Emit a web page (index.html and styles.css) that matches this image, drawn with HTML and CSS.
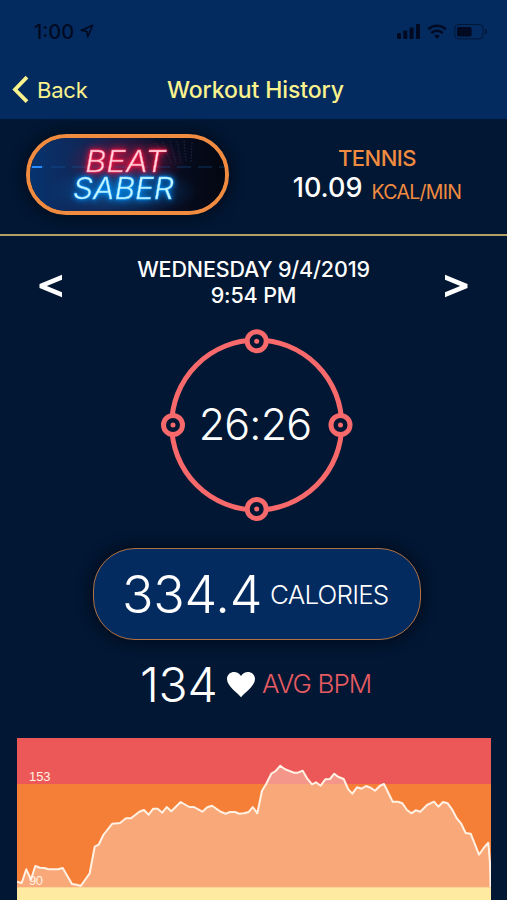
FILE: index.html
```html
<!DOCTYPE html>
<html lang="en">
<head>
<meta charset="utf-8">
<title>Workout History</title>
<link rel="stylesheet" href="styles.css">
</head>
<body>
<div class="app">
  <header class="header">
    <div class="status">
      <span class="clock">1:00</span>
      <svg class="location" viewBox="0 0 14 14"><path d="M1.2 6.4 12.6 1.2 7.8 12.8 6.8 7.2Z" fill="none" stroke="#010a20" stroke-width="1.6" stroke-linejoin="round"/></svg>
      <svg class="signals" viewBox="0 0 92 18">
        <g fill="#010a20">
          <rect x="1" y="10" width="4" height="6" rx="1"/><rect x="7.3" y="7.5" width="4" height="8.5" rx="1"/><rect x="13.6" y="4.5" width="4" height="11.5" rx="1"/><rect x="20" y="1" width="4" height="15" rx="1"/>
          <path d="M38.3 12.8a4.6 4.6 0 0 1 5.4 0L41 15.9Z"/>
          <rect x="61" y="4" width="14.6" height="9.6" rx="1.8"/>
        </g>
        <g fill="none" stroke="#010a20">
          <path d="M32.2 6.3a12.8 12.8 0 0 1 17.6 0M35.3 10a8.4 8.4 0 0 1 11.4 0" stroke-width="2.6"/>
          <rect x="58.7" y="1.5" width="28.4" height="14.4" rx="4" stroke-opacity=".65"/>
          <path d="M89.2 6.5q1.8 2.2 0 4.4" stroke-opacity=".7" stroke-width="1.5"/>
        </g>
      </svg>
    </div>
    <nav class="nav">
      <div class="back">
        <svg class="chevron" viewBox="0 0 18 30"><path d="M16 2.2 4 14.5 16 26.7" fill="none" stroke="#faf28c" stroke-width="3.8"/></svg>
        <span>Back</span>
      </div>
      <h1 class="title">Workout History</h1>
    </nav>
  </header>

  <section class="activity">
    <div class="game">
      <svg class="game-art" viewBox="0 0 195 73">
        <defs>
          <linearGradient id="night"><stop offset="0" stop-color="#06336f"/><stop offset=".35" stop-color="#14234f"/><stop offset=".7" stop-color="#080e24"/><stop offset="1" stop-color="#030710"/></linearGradient>
          <radialGradient id="redGlow"><stop offset="0" stop-color="#a01647" stop-opacity=".75"/><stop offset="1" stop-color="#7a123d" stop-opacity="0"/></radialGradient>
          <radialGradient id="blueGlow"><stop offset="0" stop-color="#0870b4" stop-opacity=".8"/><stop offset="1" stop-color="#06458c" stop-opacity="0"/></radialGradient>
        </defs>
        <rect width="195" height="73" fill="url(#night)"/>
        <ellipse cx="96" cy="24" rx="60" ry="27" fill="url(#redGlow)"/>
        <ellipse cx="92" cy="53" rx="76" ry="26" fill="url(#blueGlow)"/>
        <path d="M126 5l10 20M133 4l8 22M140 3l6 22M147 3l4 22M154 3l2 21M162 4l-1 20" stroke="#343a58" stroke-width="1" stroke-dasharray="2 1" opacity=".5"/>
        <path d="M0 29H195" stroke="#1762a8" stroke-width="1" stroke-dasharray="14 7" opacity=".5"/>
        <path d="M2 29H12" stroke="#268cff" stroke-width="2"/>
        <g class="neon">
          <text class="neon-red" x="55" y="33.5" textLength="81" lengthAdjust="spacingAndGlyphs">BEAT</text>
          <text class="neon-blue" x="43" y="60.5" textLength="101" lengthAdjust="spacingAndGlyphs">SABER</text>
        </g>
      </svg>
    </div>
    <div class="rate">
      <div class="sport">TENNIS</div>
      <div class="burn"><span class="burn-value">10.09</span><span class="burn-unit">KCAL/MIN</span></div>
    </div>
  </section>

  <section class="session">
    <svg class="arrow" viewBox="0 0 24 24"><path d="M23 .8v5L7.8 12 23 18.2v5L.5 14.1V9.9Z" fill="#fff"/></svg>
    <div class="date"><div class="day">WEDNESDAY 9/4/2019</div><div class="time">9:54 PM</div></div>
    <svg class="arrow" viewBox="0 0 24 24"><path d="M1 .8v5L16.2 12 1 18.2v5l22.5-9.1V9.9Z" fill="#fff"/></svg>
  </section>

  <section class="timer">
    <svg class="ring" viewBox="0 0 192 192">
      <g fill="#021733" stroke="#f8696c" stroke-width="5">
        <circle cx="95.7" cy="96" r="85"/>
        <circle cx="95.7" cy="12.3" r="9.5"/><circle cx="179.5" cy="96" r="9.5"/><circle cx="95.7" cy="180" r="9.5"/><circle cx="12" cy="96" r="9.5"/>
      </g>
      <g fill="#f8696c"><circle cx="95.7" cy="12.3" r="2.5"/><circle cx="179.5" cy="96" r="2.5"/><circle cx="95.7" cy="180" r="2.5"/><circle cx="12" cy="96" r="2.5"/></g>
    </svg>
    <span class="duration">26:26</span>
  </section>

  <section class="calories"><span class="cal-value">334.4</span><span class="cal-unit">CALORIES</span></section>

  <section class="heart-rate">
    <span class="bpm-value">134</span>
    <svg class="heart" viewBox="0 0 30 27"><path d="M15 26.2C11.7 22 1 15.2 1 8.1 1 .2 11.2-1.7 15 4.9 18.8-1.7 29 .2 29 8.1c0 7.1-10.7 13.9-14 18.1Z" fill="#fff"/></svg>
    <span class="bpm-unit">AVG BPM</span>
  </section>

  <svg class="chart" viewBox="17 738 474 162">
    <rect x="17" y="738" width="474" height="46" fill="#ec5858"/>
    <rect x="17" y="784" width="474" height="104" fill="#f67f38"/>
    <path fill="#fbd4b9" fill-opacity=".5" d="M17 888V881.7L21.7 883 26.3 869.3 31 879.5 35.3 866 40 867.7 44.3 868 48.7 869.3 58 869.3 62.7 868 72 884 76.7 884.7 80.7 886 89.7 873.3 94.7 846.7 98.7 844.7 103.3 835 112.3 823.7 120 823 126 818.3 131 818.3 139.3 811.7 144 810 148.7 814.7 153.3 808.7 157.7 808.7 162.3 812.7 166.7 807 171.3 811.3 180.7 802 189.3 807 194 807 202.3 811.7 207.3 807.3 212 805.7 220.7 811.7 225.7 813.7 230 812 235 812 239.3 813.7 244 813.3 248.7 812 252.7 807 257.3 813.3 262 790.7 266 784.3 271.3 773.7 275.7 771 280.3 765.7 285 769.3 294 772.7 298 772.7 302.7 770.7 307.3 778.7 312 784.3 316 782.3 320.7 785.7 325.3 779.3 330 779 334.3 773.7 338 776.7 343.7 779 348.3 789.3 352.3 793.7 357 787.3 361.7 788.7 366 786 370.7 787.7 375 790.7 379.7 786 384 784 392.7 801.7 398 801.7 402.3 803.3 407 810 411.3 813.3 415.7 810.3 420.3 811.7 427 805 434 801.7 438.3 806.7 443 802 447.7 803.3 452 809.3 457 818.7 461 823.3 465.7 833 470.7 833.7 479 854.7 483.7 848 488.3 842.7 490 863 490.5 888Z"/>
    <path fill="none" stroke="#fff2e4" stroke-width="2" stroke-linejoin="round" d="M17 881.7L21.7 883 26.3 869.3 31 879.5 35.3 866 40 867.7 44.3 868 48.7 869.3 58 869.3 62.7 868 72 884 76.7 884.7 80.7 886 89.7 873.3 94.7 846.7 98.7 844.7 103.3 835 112.3 823.7 120 823 126 818.3 131 818.3 139.3 811.7 144 810 148.7 814.7 153.3 808.7 157.7 808.7 162.3 812.7 166.7 807 171.3 811.3 180.7 802 189.3 807 194 807 202.3 811.7 207.3 807.3 212 805.7 220.7 811.7 225.7 813.7 230 812 235 812 239.3 813.7 244 813.3 248.7 812 252.7 807 257.3 813.3 262 790.7 266 784.3 271.3 773.7 275.7 771 280.3 765.7 285 769.3 294 772.7 298 772.7 302.7 770.7 307.3 778.7 312 784.3 316 782.3 320.7 785.7 325.3 779.3 330 779 334.3 773.7 338 776.7 343.7 779 348.3 789.3 352.3 793.7 357 787.3 361.7 788.7 366 786 370.7 787.7 375 790.7 379.7 786 384 784 392.7 801.7 398 801.7 402.3 803.3 407 810 411.3 813.3 415.7 810.3 420.3 811.7 427 805 434 801.7 438.3 806.7 443 802 447.7 803.3 452 809.3 457 818.7 461 823.3 465.7 833 470.7 833.7 479 854.7 483.7 848 488.3 842.7 490 863 490.5 887"/>
    <rect x="17" y="887.3" width="474" height="13" fill="#ffeaa2"/>
    <text class="zone" x="29" y="781" textLength="21.5">153</text>
    <text class="zone" x="29" y="885" textLength="14">90</text>
  </svg>
</div>
</body>
</html>
```
FILE: styles.css
```css
* { box-sizing: border-box; }
body { margin: 0; background: #021733; color: #fff; font-family: Inter, "Liberation Sans", sans-serif; }
.app { width: 507px; height: 900px; overflow: hidden; display: flex; flex-direction: column; }
.app > * { flex-shrink: 0; }
svg { display: block; flex-shrink: 0; }
span, .title, .sport, .day, .time { white-space: nowrap; }

.header { height: 119px; background: #032b60; color: #faf28c; }
.status { height: 62px; padding: 23px 19px 0 34px; display: flex; align-items: flex-start; color: #010a20; }
.clock { font-size: 20px; line-height: 18px; font-weight: 550; letter-spacing: 0; width: 42px; }
.location { width: 14px; height: 14px; margin: 1px 0 0 4px; }
.signals { width: 92px; height: 18px; margin-left: auto; }
.nav { height: 56px; display: grid; grid-template-columns: 156px auto; align-items: center; padding-left: 11px; }
.back { display: flex; align-items: center; gap: 8px; font-size: 22px; letter-spacing: -.2px; }
.chevron { width: 18px; height: 30px; }
.title { margin: 0; font-size: 23px; line-height: 28px; font-weight: 550; letter-spacing: -.1px; }

.activity { height: 117px; border-bottom: 2px solid #b49e64; display: flex; padding: 15px 0 0 26px; }
.game { width: 203px; height: 81px; border: 4px solid #f18b40; border-radius: 41px; overflow: hidden; box-shadow: 0 0 12px 4px #010e20; }
.game-art { width: 195px; height: 73px; }
.neon text { font-family: Inter, sans-serif; font-style: italic; font-weight: 300; font-size: 30px; }
.neon-red { fill: #ffd5df; stroke: #ff6f91; stroke-width: .3px; filter: drop-shadow(0 0 1px #ff123f) drop-shadow(0 0 3px #ff123f); }
.neon-blue { fill: #cbf7ff; stroke: #6fd4ff; stroke-width: .3px; filter: drop-shadow(0 0 1px #008fff) drop-shadow(0 0 3px #008fff); }
.rate { width: 170px; margin-left: 63px; padding-top: 11px; text-align: center; color: #f18b40; }
.sport { font-size: 22px; line-height: 26px; font-weight: 500; letter-spacing: -.5px; }
.burn { display: flex; justify-content: center; align-items: baseline; gap: 9px; line-height: 33px; }
.burn-value { color: #fff; font-size: 27px; font-weight: 550; }
.burn-unit { font-size: 19.5px; letter-spacing: -.7px; transform: translateY(2px); }

.session { height: 88px; padding: 20px 39px 0; display: flex; justify-content: space-between; }
.arrow { width: 24px; height: 24px; margin-top: 18px; }
.date { text-align: center; font-size: 21.5px; line-height: 26px; font-weight: 500; letter-spacing: -.15px; }

.timer { height: 200px; display: grid; place-items: start center; padding: 5px 0 0 6px; }
.timer > * { grid-area: 1 / 1; }
.ring { width: 192px; height: 192px; }
.duration { font-size: 43px; line-height: 52px; font-weight: 350; letter-spacing: -.8px; margin: 69px 3px 0 0; }

.calories { width: 328px; height: 92px; margin: 24px 0 0 93px; border: 1.5px solid #b17243; border-radius: 42px; background: #032b60; box-shadow: 0 0 12px 4px #010e20; display: flex; padding-left: 28px; align-items: baseline; gap: 9px; line-height: 91px; }
.cal-value { font-size: 52px; font-weight: 350; width: 139px; letter-spacing: -.2px; }
.cal-unit { font-size: 26px; font-weight: 350; letter-spacing: -.8px; transform: translateY(-9.5px); }

.heart-rate { height: 98px; padding-left: 140px; display: flex; align-items: baseline; line-height: 89px; }
.bpm-value { font-size: 48px; font-weight: 350; width: 78px; letter-spacing: -.3px; }
.heart { width: 30px; height: 27px; margin: 31px 6px 0 8px; align-self: flex-start; }
.bpm-unit { font-size: 26px; font-weight: 350; letter-spacing: -.9px; color: #e65b63; transform: translateY(-9px); }

.chart { width: 474px; height: 162px; margin-left: 17px; }
.zone { font: 13px "Liberation Sans", sans-serif; fill: #fff2e4; }
```
